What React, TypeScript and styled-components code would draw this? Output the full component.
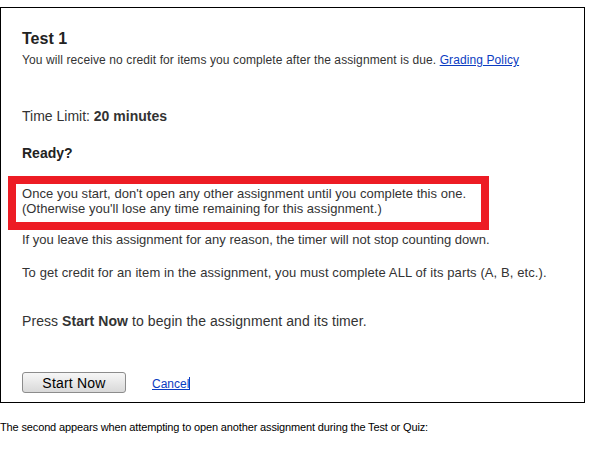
import React from "react";
import styled, { createGlobalStyle } from "styled-components";

const GlobalStyle = createGlobalStyle`
  html, body {
    margin: 0;
    padding: 0;
    background: #fff;
    font-family: "Liberation Sans", Arial, sans-serif;
  }
`;

const Frame = styled.div`
  box-sizing: border-box;
  width: 585px;
  margin-top: 7px;
  border: 1px solid #000;
  padding: 21px 0 9px 21px;
  color: #333;
`;

const Title = styled.h1`
  margin: 0;
  font-size: 16px;
  line-height: 19px;
  font-weight: bold;
  color: #222;
`;

const Note = styled.p`
  margin: 5px 0 0;
  font-size: 12px;
  line-height: 14px;
  letter-spacing: 0.1px;
`;

const Link = styled.a`
  color: #0b3cc1;
  text-decoration: underline;
  cursor: pointer;
`;

const Line = styled.p<{ $top: number; $size?: number; $spacing?: number }>`
  margin: ${(p) => p.$top}px 0 0;
  font-size: ${(p) => p.$size ?? 13}px;
  line-height: ${(p) => (p.$size ?? 13) + 2}px;
  letter-spacing: ${(p) => p.$spacing ?? 0}px;
`;

const Heading = styled.p`
  margin: 21px 0 0;
  font-size: 14px;
  line-height: 16px;
  font-weight: bold;
  color: #222;
`;

const Warning = styled.div`
  box-sizing: border-box;
  width: 481px;
  margin: 15px 0 0 -14px;
  border: 8px solid #ed1c24;
  padding: 2px 0 6px 6px;
  font-size: 13px;
  line-height: 15px;
  letter-spacing: 0.04px;
`;

const Actions = styled.div`
  display: flex;
  align-items: center;
  gap: 26px;
  margin-top: 43px;
`;

const StartButton = styled.button`
  box-sizing: border-box;
  width: 104px;
  height: 21px;
  padding: 0;
  border: 1px solid #8c8c8c;
  border-radius: 3px;
  background: linear-gradient(#f7f7f7, #d9d9d9);
  font-family: "Liberation Sans", Arial, sans-serif;
  font-size: 14px;
  letter-spacing: 0.2px;
  color: #000;
`;

const CancelLink = styled(Link)`
  font-size: 12px;
  line-height: 14px;
  margin-top: 3px;
`;

const Caret = styled.span`
  display: inline-block;
  width: 1px;
  height: 13px;
  background: #0b3cc1;
  vertical-align: -2px;
`;

const Footer = styled.p`
  margin: 18px 0 0;
  font-size: 11px;
  line-height: 13px;
  letter-spacing: -0.14px;
  color: #000;
`;

export default function App() {
  return (
    <>
      <GlobalStyle />
      <Frame>
        <Title>Test 1</Title>
        <Note>
          You will receive no credit for items you complete after the assignment is due.{" "}
          <Link>Grading Policy</Link>
        </Note>
        <Line $top={41} $size={14}>
          Time Limit: <b>20 minutes</b>
        </Line>
        <Heading>Ready?</Heading>
        <Warning>
          Once you start, don't open any other assignment until you complete this one.
          <br />
          (Otherwise you'll lose any time remaining for this assignment.)
        </Warning>
        <Line $top={2}>
          If you leave this assignment for any reason, the timer will not stop counting down.
        </Line>
        <Line $top={18} $spacing={0.1}>
          To get credit for an item in the assignment, you must complete ALL of its parts (A, B, etc.).
        </Line>
        <Line $top={33} $size={14} $spacing={0.07}>
          Press <b>Start Now</b> to begin the assignment and its timer.
        </Line>
        <Actions>
          <StartButton>Start Now</StartButton>
          <span>
            <CancelLink>Cancel</CancelLink>
            <Caret />
          </span>
        </Actions>
      </Frame>
      <Footer>The second appears when attempting to open another assignment during the Test or Quiz:</Footer>
    </>
  );
}
